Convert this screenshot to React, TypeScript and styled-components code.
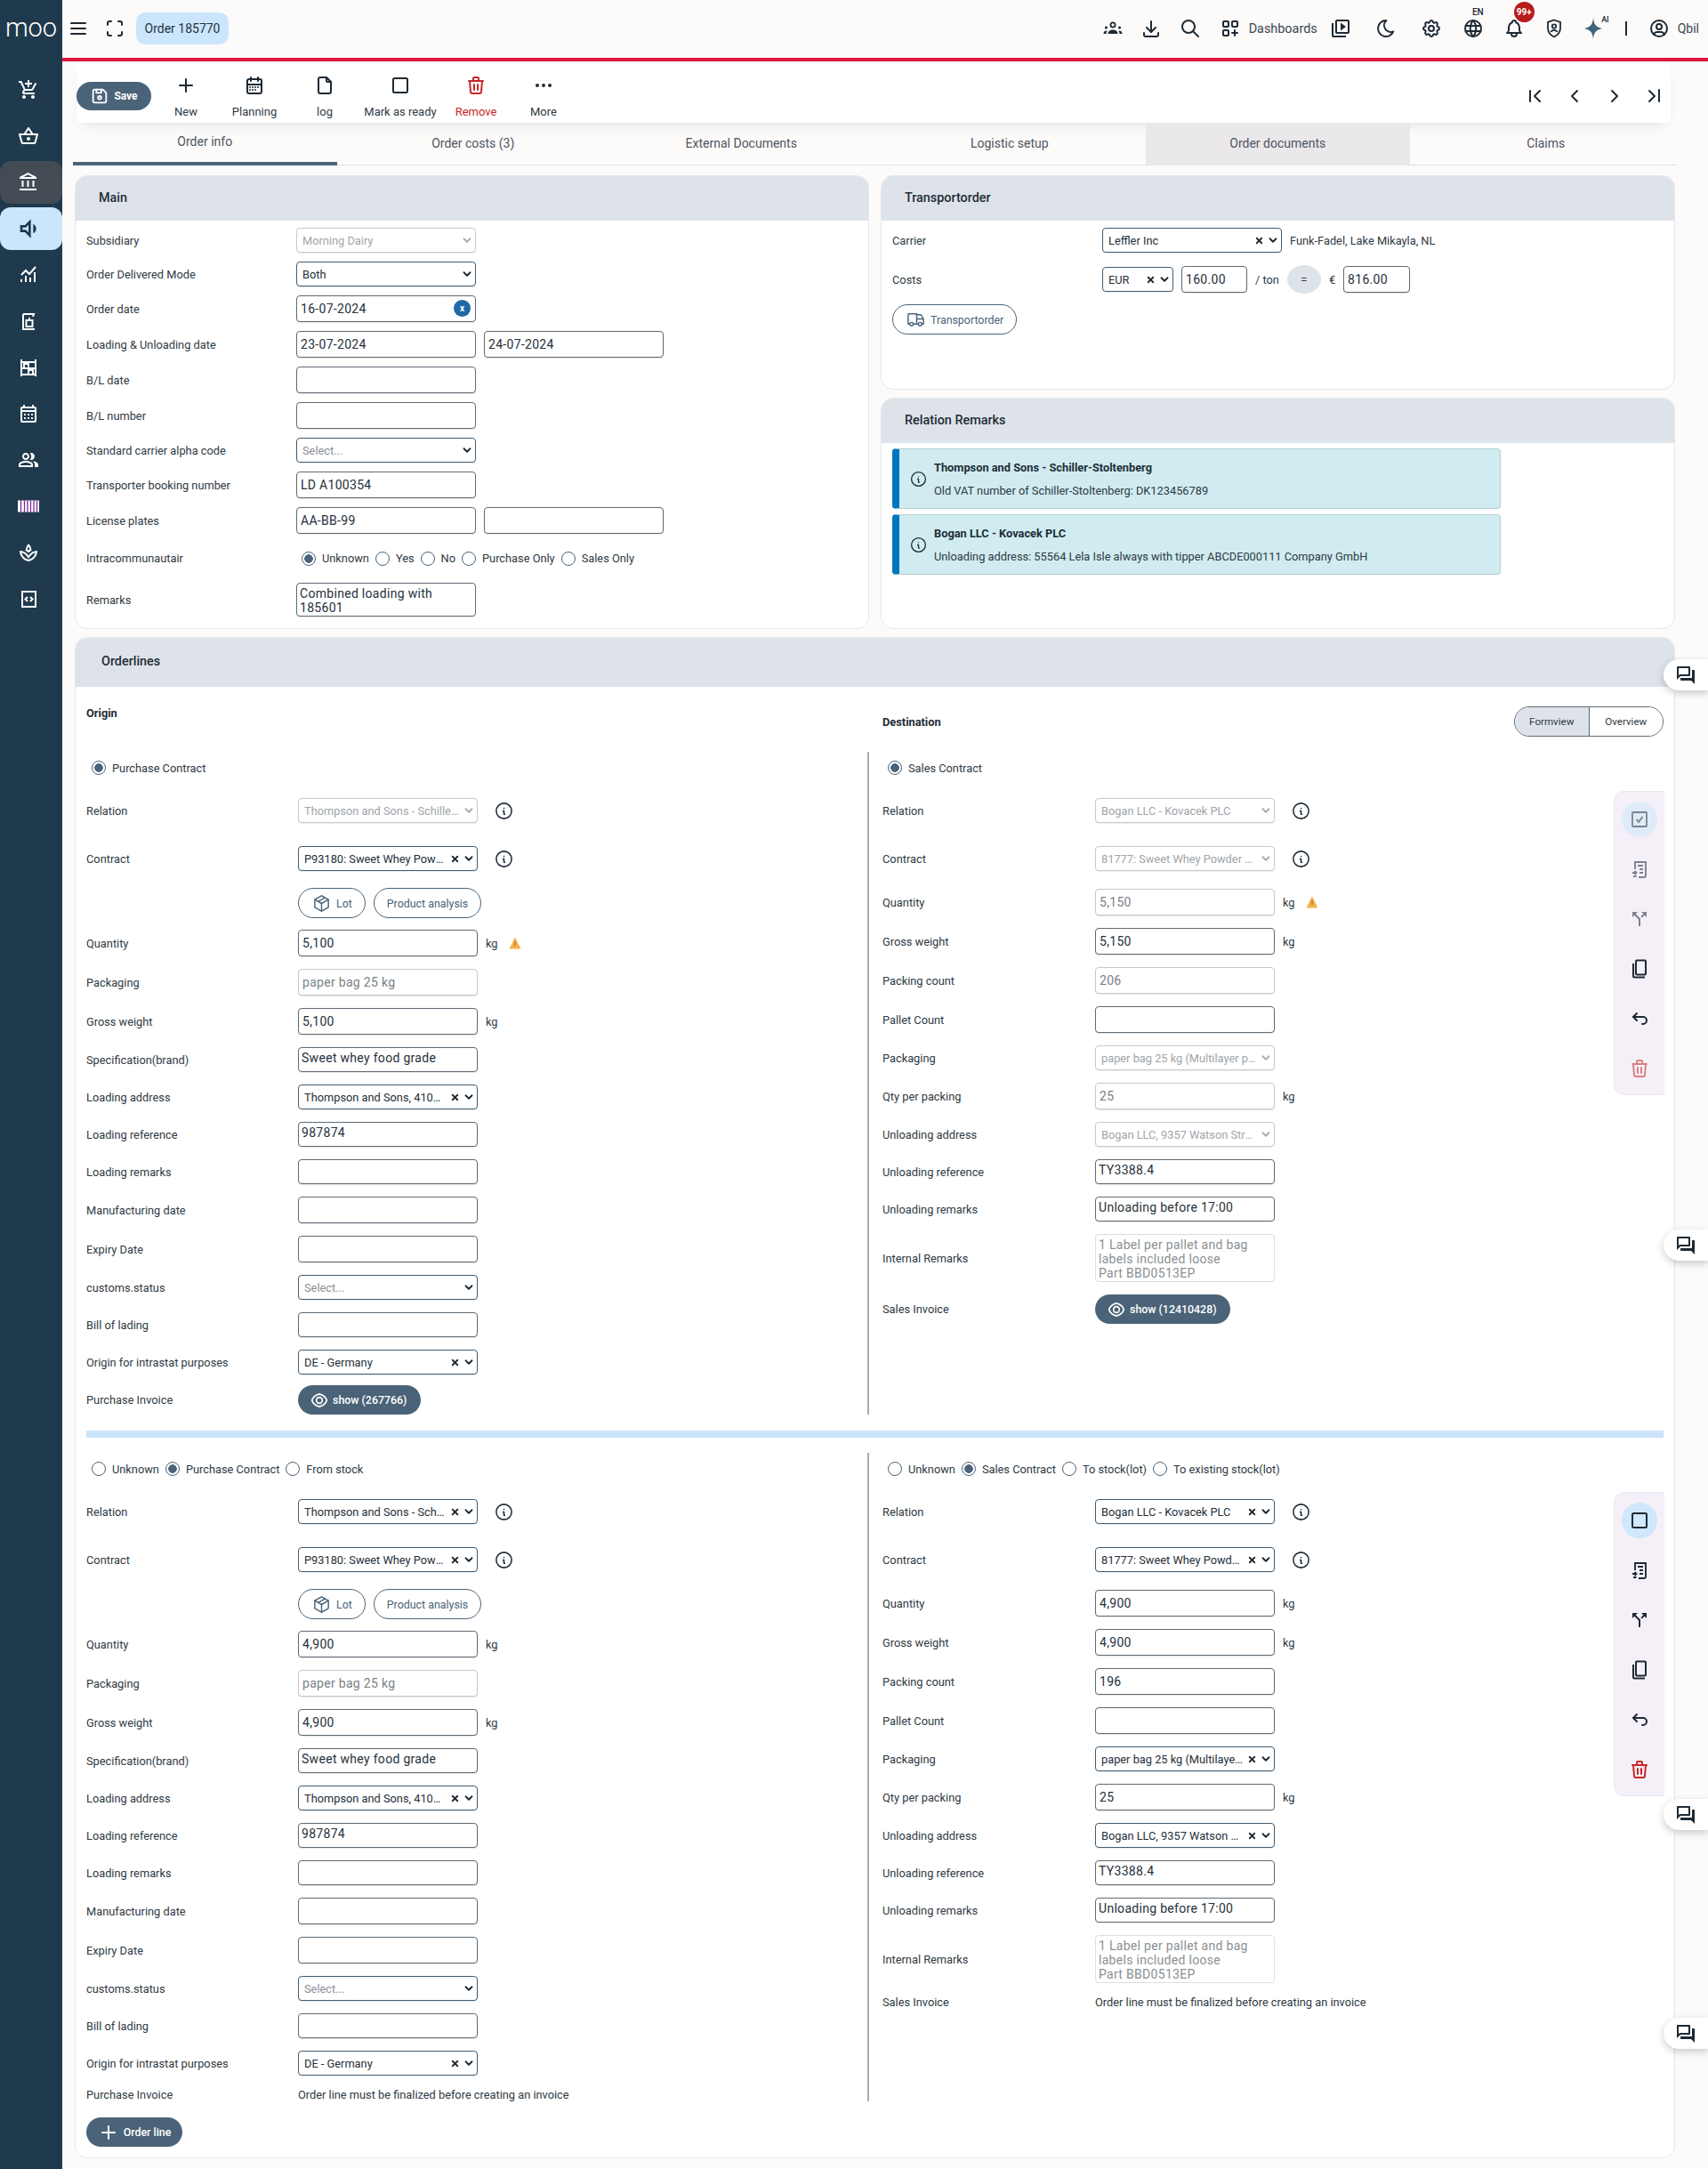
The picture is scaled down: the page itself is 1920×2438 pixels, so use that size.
import React from "react";
import styled, { createGlobalStyle } from "styled-components";
import {
  TbMenu2, TbMaximize, TbDownload, TbSearch, TbLayoutGridAdd, TbMoon, TbSettings, TbWorld, TbBell,
  TbUserCircle, TbChevronLeft, TbChevronRight, TbChevronLeftPipe, TbChevronRightPipe, TbPlus,
  TbCalendarMonth, TbFile, TbTrash, TbDots, TbDeviceFloppy, TbPackage, TbTruck, TbInfoCircle,
  TbArrowBackUp, TbChevronDown, TbX,
} from "react-icons/tb";
import {
  MdOutlineAddShoppingCart, MdOutlineShoppingBasket, MdOutlineAccountBalance, MdOutlineVolumeDown,
  MdOutlineCalendarMonth, MdOutlinePeopleAlt, MdOutlineSpa, MdOutlineVideoLibrary, MdOutlineQuestionAnswer,
  MdCallSplit,
} from "react-icons/md";

const GlobalStyle = createGlobalStyle`
  html, body { margin: 0; padding: 0; background: #fdfafa; }
  body { font-family: Roboto, "Liberation Sans", sans-serif; color: #222; overflow: hidden; }
  * { box-sizing: border-box; }
`;

const navy = "#4a6378";

const Page = styled.div`
  display: flex;
  width: 1920px;
  height: 2438px;
  position: relative;
  overflow: hidden;
`;

/* sidebar */
const Sidebar = styled.aside`
  width: 70px;
  flex: none;
  background: #1f3a4d;
  color: #fff;
`;
const Logo = styled.div`
  height: 65px;
  display: flex;
  align-items: center;
  justify-content: center;
  font-size: 29px;
  font-weight: 300;
  padding-bottom: 4px;
`;
const SideList = styled.nav`
  margin-top: 12px;
  display: flex;
  flex-direction: column;
  gap: 4px;
`;
const SideItem = styled.div<{ $state?: "hover" | "active" }>`
  height: 48px;
  display: flex;
  align-items: center;
  justify-content: center;
  padding-right: 6px;
  border-radius: 12px;
  font-size: ${(p) => (p.$state === "active" ? 32 : 24)}px;
  background: ${(p) => (p.$state === "hover" ? "#434c55" : p.$state === "active" ? "#cbe6fc" : "transparent")};
  color: ${(p) => (p.$state === "active" ? "#1f3a4d" : "#fff")};
`;

/* header */
const Main = styled.div`
  flex: 1;
  min-width: 0;
`;
const Header = styled.header`
  height: 69px;
  border-bottom: 4px solid #e0143f;
  display: flex;
  align-items: center;
  padding: 0 10px 1px 6px;
`;
const HeadIcon = styled.span<{ $gap?: number; $size?: number }>`
  position: relative;
  display: inline-flex;
  margin-left: ${(p) => p.$gap ?? 0}px;
  font-size: ${(p) => p.$size ?? 24}px;
  color: #1d2a35;
`;
const Chip = styled.div`
  margin-left: 12px;
  width: 104px;
  height: 36px;
  border-radius: 10px;
  background: #cbe6fc;
  display: flex;
  align-items: center;
  justify-content: center;
  font-size: 14px;
  color: #24323e;
`;
const HeadRight = styled.div`
  margin-left: auto;
  display: flex;
  align-items: center;
`;
const DashLabel = styled.span`
  margin-left: 9px;
  font-size: 14.4px;
  color: #3a4752;
`;
const TinyTag = styled.span<{ $beside?: boolean }>`
  position: absolute;
  top: ${(p) => (p.$beside ? -3 : -12)}px;
  right: ${(p) => (p.$beside ? -6 : 0)}px;
  font-size: ${(p) => (p.$beside ? 9 : 10)}px;
  font-weight: 500;
`;
const Badge = styled.span`
  position: absolute;
  top: -18px;
  right: -11px;
  width: 23px;
  height: 23px;
  border-radius: 50%;
  background: #b71c1c;
  color: #fff;
  font-size: 10px;
  font-weight: 700;
  display: flex;
  align-items: center;
  justify-content: center;
`;
const VBar = styled.span`
  margin-left: 24px;
  width: 2px;
  height: 16px;
  background: #1d2a35;
`;
const UserName = styled.span`
  margin-left: 9px;
  font-size: 14px;
  color: #3a4752;
`;

/* toolbar */
const Toolbar = styled.div`
  height: 69px;
  margin-left: 16px;
  margin-right: 42px;
  padding-right: 6px;
  display: flex;
  align-items: center;
  background: #fff;
  box-shadow: 0 8px 14px -8px rgba(60, 60, 70, 0.18);
`;
const SaveButton = styled.button`
  width: 84px;
  height: 32px;
  margin-top: 9px;
  border: 0;
  border-radius: 16px;
  background: ${navy};
  color: #fff;
  display: flex;
  align-items: center;
  justify-content: center;
  gap: 5px;
  font: 700 12px Roboto, sans-serif;
  svg { font-size: 22px; }
`;
const ToolItem = styled.div<{ $w: number; $red?: boolean }>`
  width: ${(p) => p.$w}px;
  margin-top: 10px;
  display: flex;
  flex-direction: column;
  align-items: center;
  gap: 10px;
  font-size: 13px;
  color: ${(p) => (p.$red ? "#c62828" : "#2f3b46")};
  svg { font-size: 24px; color: ${(p) => (p.$red ? "#c62828" : "#1d2a35")}; }
`;
const Pager = styled.div`
  margin-left: auto;
  margin-top: 9px;
  display: flex;
  gap: 21px;
  font-size: 24px;
  color: #1d2a35;
`;

/* tabs */
const Tabs = styled.div`
  margin: 0 34px 0 12px;
  height: 48px;
  display: flex;
  gap: 5px;
  border-bottom: 1px solid #e2e2e4;
`;
const Tab = styled.div<{ $active?: boolean; $hover?: boolean }>`
  flex: 1;
  height: 48px;
  display: flex;
  align-items: center;
  justify-content: center;
  font-size: 14px;
  color: #4d5560;
  padding-bottom: ${(p) => (p.$active ? 2 : 3)}px;
  background: ${(p) => (p.$hover ? "#ebe8eb" : "transparent")};
  border-bottom: ${(p) => (p.$active ? `4px solid ${navy}` : "0")};
`;

/* panels */
const Content = styled.div`
  margin: 11px 37px 0 14px;
  display: flex;
  flex-direction: column;
  gap: 9px;
`;
const TopGrid = styled.div`
  display: grid;
  grid-template-columns: 893px 893px;
  gap: 13px;
`;
const Stack = styled.div`
  display: flex;
  flex-direction: column;
  gap: 9px;
`;
const Panel = styled.section<{ $h?: number }>`
  background: #fff;
  border: 1px solid #e4e8ed;
  border-radius: 14px;
  height: ${(p) => (p.$h ? `${p.$h}px` : "auto")};
  overflow: hidden;
`;
const PanelHead = styled.h2<{ $h?: number; $pad?: number }>`
  margin: 0;
  height: ${(p) => p.$h ?? 50}px;
  background: #dee3ea;
  padding: 0 0 2px ${(p) => p.$pad ?? 26}px;
  display: flex;
  align-items: center;
  font-size: 14.4px;
  font-weight: 500;
  color: #222c36;
`;
const PanelBody = styled.div<{ $gap?: number; $pad?: string }>`
  padding: ${(p) => p.$pad ?? "8px 12px"};
  display: flex;
  flex-direction: column;
  gap: ${(p) => p.$gap ?? 10}px;
`;

/* form rows */
const Row = styled.div<{ $label: number; $mt?: number; $h?: number }>`
  display: grid;
  grid-template-columns: ${(p) => p.$label}px auto;
  align-items: center;
  margin-top: ${(p) => p.$mt ?? 0}px;
  min-height: ${(p) => p.$h ?? 0}px;
`;
const Label = styled.label`
  font-size: 12.8px;
  color: #2f3a44;
`;
const Controls = styled.div`
  display: flex;
  align-items: center;
  gap: 9px;
  font-size: 12.8px;
  color: #2f3a44;
`;
const TextInput = styled.input<{ $w?: number }>`
  width: ${(p) => p.$w ?? 202}px;
  height: 30px;
  flex: none;
  border: 1px solid #5d6a75;
  border-radius: 4px;
  padding: 0 4px;
  background: #fff;
  font: 14px/1.2 Roboto, sans-serif;
  letter-spacing: 0.3px;
  color: #26303a;
  box-shadow: 0 1px 1px rgba(0, 0, 0, 0.1);
  &:disabled {
    border-color: #c4c9ce;
    color: #7a7f85;
    opacity: 1;
  }
`;
const TextBox = styled.textarea<{ $h?: number }>`
  display: block;
  width: 202px;
  height: ${(p) => p.$h ?? 28}px;
  border: 1px solid #5d6a75;
  border-radius: 4px;
  padding: 3px 3px 0;
  resize: none;
  overflow: hidden;
  background: #fff;
  font: 14px/16px Roboto, sans-serif;
  letter-spacing: 0.3px;
  color: #26303a;
  box-shadow: 0 1px 1px rgba(0, 0, 0, 0.1);
  &:disabled {
    border-color: #dcdfe2;
    color: #8a8f94;
    box-shadow: none;
  }
`;
const SelectFrame = styled.div<{ $locked?: boolean; $w?: number }>`
  width: ${(p) => p.$w ?? 202}px;
  height: 28px;
  flex: none;
  display: flex;
  align-items: center;
  padding: 0 2px 0 6px;
  background: #fff;
  border: 1px solid ${(p) => (p.$locked ? "#c4cad0" : "#3f5c73")};
  border-radius: 4px;
  box-shadow: 0 1px 1px rgba(0, 0, 0, 0.08);
  color: ${(p) => (p.$locked ? "#a0a5aa" : "#26303a")};
  font-size: 12.8px;
`;
const SelectText = styled.span<{ $placeholder?: boolean; $room?: boolean }>`
  flex: 1;
  min-width: 0;
  margin-right: ${(p) => (p.$room ? 4 : 0)}px;
  overflow: hidden;
  white-space: nowrap;
  text-overflow: ellipsis;
  color: ${(p) => (p.$placeholder ? "#8b9096" : "inherit")};
`;
const ClearMark = styled(TbX)`
  flex: none;
  font-size: 11px;
  stroke-width: 4;
  margin: 0 3px 0 5px;
  color: #1d2a35;
`;
const Chevron = styled(TbChevronDown)<{ $locked?: boolean }>`
  flex: none;
  font-size: 14px;
  stroke-width: 3.2;
  color: ${(p) => (p.$locked ? "#a8adb2" : "#1d2a35")};
`;
const InfoMark = styled(TbInfoCircle)`
  flex: none;
  font-size: 23px;
  margin-left: 9px;
  stroke-width: 1.6;
  color: #1d2a35;
`;
const Warn = styled.svg`
  margin-left: 3px;
  width: 14px;
  height: 14px;
`;
const DateWrap = styled.span`
  position: relative;
  display: inline-flex;
  justify-self: start;
`;
const DateClear = styled.span`
  position: absolute;
  right: 6px;
  top: 5px;
  width: 19px;
  height: 19px;
  border-radius: 50%;
  background: #1f69a8;
  color: #fff;
  display: flex;
  align-items: center;
  justify-content: center;
  font-size: 10px;
  font-weight: 700;
`;
const RadioGroup = styled.div<{ $pad?: number; $h?: number }>`
  display: flex;
  align-items: center;
  gap: 7px;
  padding-left: ${(p) => p.$pad ?? 6}px;
  height: ${(p) => p.$h ?? 36}px;
  font-size: 12.8px;
  color: #2f3a44;
`;
const RadioItem = styled.label`
  display: flex;
  align-items: center;
  gap: 7px;
`;
const RadioDot = styled.input`
  appearance: none;
  margin: 0;
  width: 16px;
  height: 16px;
  border-radius: 50%;
  border: 1.5px solid ${navy};
  background: #fff;
  &:checked {
    background: radial-gradient(circle, ${navy} 0 4.5px, #fff 5px);
  }
`;
const PillOutline = styled.button`
  height: 34px;
  padding: 0 14px;
  display: inline-flex;
  align-items: center;
  gap: 5px;
  border: 1px solid ${navy};
  border-radius: 17px;
  background: #fff;
  color: ${navy};
  font: 12.4px Roboto, sans-serif;
  white-space: nowrap;
  svg { font-size: 23px; stroke-width: 1.5; }
`;
const PillFill = styled.button<{ $w?: number }>`
  height: 33px;
  width: ${(p) => (p.$w ? `${p.$w}px` : "auto")};
  padding: 0 14px;
  display: inline-flex;
  align-items: center;
  gap: 5px;
  border: 0;
  border-radius: 17px;
  background: ${navy};
  color: #fff;
  font: 500 12.4px Roboto, sans-serif;
  white-space: nowrap;
  svg { flex: none; }
`;

/* transport */
const Plain = styled.span`
  font-size: 12.8px;
  color: #2f3a44;
`;
const EqualBubble = styled.span`
  width: 38px;
  height: 32px;
  border-radius: 50%;
  background: #dee3ea;
  display: flex;
  align-items: center;
  justify-content: center;
  font-size: 13px;
`;
const ButtonSlot = styled.div`
  margin-top: -2px;
`;
const Notice = styled.div`
  width: 684px;
  height: 68px;
  display: flex;
  align-items: center;
  background: #d0ecf1;
  border: 1px solid #b5cfd6;
  border-left: 8px solid #0277bd;
  border-radius: 4px;
  padding-left: 11px;
  gap: 7px;
  font-size: 12.8px;
  color: #2f3a44;
  svg { font-size: 21px; flex: none; stroke-width: 1.5; color: #1d2a35; }
`;
const NoticeText = styled.div`
  display: flex;
  flex-direction: column;
  gap: 11px;
  strong { font-weight: 700; color: #222c36; font-size: 12.8px; }
`;

/* orderlines */
const HeadingRow = styled.div`
  height: 73px;
  display: flex;
`;
const Origin = styled.h3`
  margin: 22px 0 0;
  width: 895px;
  font-size: 12.8px;
  font-weight: 700;
  color: #222c36;
`;
const Destination = styled.div`
  flex: 1;
  height: 73px;
  padding-top: 5px;
  display: flex;
  align-items: center;
  justify-content: space-between;
  h3 { margin: 0; font-size: 12.8px; font-weight: 700; color: #222c36; }
`;
const ViewToggle = styled.div`
  display: flex;
  width: 168px;
  height: 34px;
  border: 1px solid #5d6a75;
  border-radius: 17px;
  overflow: hidden;
  font-size: 11.6px;
  color: #2f3a44;
`;
const ViewOption = styled.span<{ $on?: boolean }>`
  flex: 1;
  display: flex;
  align-items: center;
  justify-content: center;
  background: ${(p) => (p.$on ? "#dee3ea" : "#fff")};
  & + & { border-left: 1px solid #5d6a75; }
`;
const Block = styled.div`
  display: grid;
  grid-template-columns: 878px 896px;
`;
const LeftCol = styled.div`
  display: flex;
  flex-direction: column;
`;
const RightCol = styled.div`
  border-left: 2px solid #a9adb1;
  padding-left: 15px;
  display: flex;
  justify-content: space-between;
`;
const StackCol = styled.div`
  display: flex;
  flex-direction: column;
`;
const Actions = styled.div`
  width: 57px;
  height: 342px;
  margin-top: 44px;
  padding-top: 11px;
  background: #f5f0f7;
  border: 1px solid #ece8ee;
  border-right: 0;
  border-radius: 12px 0 0 12px;
  display: flex;
  flex-direction: column;
  align-items: center;
  gap: 16px;
`;
const ActionSlot = styled.span<{ $on?: boolean; $red?: boolean; $dim?: boolean }>`
  width: 40px;
  height: 40px;
  border-radius: 50%;
  display: flex;
  align-items: center;
  justify-content: center;
  font-size: 24px;
  background: ${(p) => (p.$on ? "#cfe8fb" : "transparent")};
  color: ${(p) => (p.$red ? "#c62828" : "#1d2a35")};
  opacity: ${(p) => (p.$dim ? 0.55 : 1)};
`;
const BlueRule = styled.div`
  height: 8px;
  margin: 18px 0 17px;
  background: #cbe4f9;
`;
const AddLine = styled(PillFill)`
  width: 108px;
  margin-top: 18px;
  justify-content: center;
  svg { font-size: 24px; }
`;
const ChatTab = styled.div<{ $top: number }>`
  position: absolute;
  right: 0;
  top: ${(p) => p.$top}px;
  width: 50px;
  height: 35px;
  background: #fff;
  border-radius: 18px 0 0 18px;
  box-shadow: 0 3px 8px rgba(40, 50, 60, 0.25);
  display: flex;
  align-items: center;
  justify-content: center;
  font-size: 24px;
  color: #1d2a35;
`;

/* icons drawn by hand where the packages have nothing close */
const Icon = styled.svg`
  width: 1em;
  height: 1em;
  display: block;
`;
const GroupIcon = () => (
  <Icon viewBox="0 0 24 24" fill="currentColor">
    <circle cx="12" cy="8" r="2.6" fill="none" stroke="currentColor" strokeWidth="1.8" />
    <path d="M6.5 18c0-3 2.4-4.6 5.5-4.6s5.5 1.6 5.5 4.6z" />
    <circle cx="4.5" cy="11" r="1.6" />
    <circle cx="19.5" cy="11" r="1.6" />
    <path d="M1.5 18c0-2 1-3.2 3-3.5.4 0 .8.2 1 .4-.7.9-1 1.9-1 3.1zM22.5 18c0-2-1-3.2-3-3.5-.4 0-.8.2-1 .4.7.9 1 1.9 1 3.1z" />
  </Icon>
);
const ShieldIcon = () => (
  <Icon viewBox="0 0 24 24" fill="none" stroke="currentColor" strokeWidth="1.8">
    <path d="M12 2.500l7 2.500v6.500c0 4.600-3 8-7 10-4-2-7-5.400-7-10V5z" />
    <circle cx="12" cy="9.500" r="2.200" />
    <path d="M8.500 16c.6-1.500 2-2.200 3.500-2.200s2.900.7 3.500 2.200" />
  </Icon>
);
const StarIcon = () => (
  <Icon viewBox="0 0 24 24" fill="#3e627a">
    <path d="M12 0c.7 7.500 3 10.500 10 12-7 1.500-9.300 4.500-10 12-.7-7.500-3-10.500-10-12 7-1.500 9.300-4.500 10-12z" />
  </Icon>
);
const SquareIcon = () => (
  <Icon viewBox="0 0 24 24" fill="none" stroke="currentColor" strokeWidth="2">
    <rect x="4" y="4" width="16" height="16" rx="1.500" />
  </Icon>
);
const EyeRing = ({ size = 20 }: { size?: number }) => (
  <svg width={size} height={size} viewBox="0 0 24 24" fill="none" stroke="#fff" strokeWidth="2">
    <path d="M12 3.500C6.500 5 3 8.500 2 12c1 3.500 4.500 7 10 8.500 5.500-1.500 9-5 10-8.500-1-3.500-4.500-7-10-8.500z" />
    <circle cx="12" cy="12" r="4" />
  </svg>
);
const ChartIcon = () => (
  <Icon viewBox="0 0 24 24" fill="none" stroke="currentColor" strokeWidth="2">
    <path d="M4 12l5-5 4 4 7-8" />
    <path d="M4 20v-3M9 20v-7M14 20v-5M19 20V9" />
  </Icon>
);
const ScaleIcon = () => (
  <Icon viewBox="0 0 24 24" fill="none" stroke="currentColor" strokeWidth="2">
    <path d="M6 4v17h13M6 4h12l-1 3" />
    <rect x="9.500" y="11" width="7" height="7" />
    <path d="M13 8v3" />
  </Icon>
);
const ShelfIcon = () => (
  <Icon viewBox="0 0 24 24" fill="none" stroke="currentColor" strokeWidth="2">
    <path d="M4 3v19M20 3v19M4 6h16M4 13h16M4 20h16" />
    <rect x="7" y="8" width="5" height="5" />
    <rect x="12" y="15" width="5" height="5" />
  </Icon>
);
const BarcodeIcon = () => (
  <Icon viewBox="0 0 24 24">
    <path d="M0 5.500h24v13H0z" fill="#fff" />
    <path d="M3.500 5.500v13M7.500 5.500v13M11 5.500v13M14.500 5.500v13M18 5.500v13M21.500 5.500v13" stroke="#7b2c9b" strokeWidth="1.300" />
  </Icon>
);
const CodeIcon = () => (
  <Icon viewBox="0 0 24 24" fill="none" stroke="currentColor" strokeWidth="2">
    <rect x="5" y="4" width="15" height="17" />
    <path d="M11 10l-2.500 2.500L11 15M14 10l2.500 2.500L14 15" />
  </Icon>
);
const ChecklistIcon = () => (
  <Icon viewBox="0 0 24 24" fill="none" stroke="currentColor" strokeWidth="1.900">
    <path d="M7 12V4h12v15.500a1.500 1.500 0 0 1-1.500 1.500H11" />
    <path d="M10 8h6M12 12h4M12 16h4" />
    <path d="M4 16h4.500M6.500 14l2 2-2 2M8.500 20H5" />
  </Icon>
);
const CheckBoxIcon = () => (
  <Icon viewBox="0 0 24 24" fill="none" stroke="currentColor" strokeWidth="1.800">
    <rect x="4" y="4" width="16" height="16" rx="1" />
    <path d="M8.500 12l2.500 3 4.500-6" />
  </Icon>
);
const CopyIcon = () => (
  <Icon viewBox="0 0 24 24" fill="none" stroke="currentColor" strokeWidth="2">
    <rect x="8" y="2.500" width="11" height="16" rx="1" />
    <path d="M5 6v14.500a1 1 0 0 0 1 1h12" />
  </Icon>
);
const WarnIcon = () => (
  <Warn viewBox="0 0 24 24">
    <path d="M12 1L23 23H1z" fill="#f6b04a" />
    <path d="M12 8v9" stroke="#a5611a" strokeWidth="1.800" />
  </Warn>
);

type SelectProps = { value?: string; placeholder?: string; locked?: boolean; clear?: boolean; w?: number };
const Select = ({ value, placeholder, locked, clear, w }: SelectProps) => (
  <SelectFrame $locked={locked} $w={w}>
    <SelectText $placeholder={!!placeholder} $room={!clear}>{value ?? placeholder}</SelectText>
    {clear && <ClearMark />}
    <Chevron $locked={locked} />
  </SelectFrame>
);

const Radios = ({ items, on, pad, h }: { items: string[]; on: string; pad?: number; h?: number }) => (
  <RadioGroup $pad={pad} $h={h}>
    {items.map((name) => (
      <RadioItem key={name}>
        <RadioDot type="radio" readOnly checked={name === on} />
        {name}
      </RadioItem>
    ))}
  </RadioGroup>
);

const F = ({ label, mt = 14, w = 238, children }: { label: string; mt?: number; w?: number; children: React.ReactNode }) => (
  <Row $label={w} $mt={mt}>
    <Label>{label}</Label>
    <Controls>{children}</Controls>
  </Row>
);

const Sent = () => <Plain>Order line must be finalized before creating an invoice</Plain>;

const Show = ({ text, w }: { text: string; w: number }) => (
  <PillFill $w={w}>
    <EyeRing />
    {text}
  </PillFill>
);

type OriginProps = { radios: string[]; relation: string; qty: string; warn?: boolean; invoice: React.ReactNode };
const OriginForm = ({ radios, relation, qty, warn, invoice }: OriginProps) => {
  const locked = radios.length === 1;
  return (
    <LeftCol>
      <Radios items={radios} on="Purchase Contract" />
      <F label="Relation" mt={16}>
        <Select value={relation} locked={locked} clear={!locked} />
        <InfoMark />
      </F>
      <F label="Contract" mt={26}>
        <Select value="P93180: Sweet Whey Powder 25 kg" clear />
        <InfoMark />
      </F>
      <F label="" mt={19}>
        <PillOutline>
          <TbPackage /> Lot
        </PillOutline>
        <PillOutline>Product analysis</PillOutline>
      </F>
      <F label="Quantity" mt={13}>
        <TextInput readOnly value={qty} />
        kg {warn && <WarnIcon />}
      </F>
      <F label="Packaging">
        <TextInput disabled value="paper bag 25 kg" />
      </F>
      <F label="Gross weight">
        <TextInput readOnly value={qty} />
        kg
      </F>
      <F label="Specification(brand)">
        <TextBox readOnly value="Sweet whey food grade" />
      </F>
      <F label="Loading address">
        <Select value="Thompson and Sons, 4102 Main Street" clear />
      </F>
      <F label="Loading reference">
        <TextBox readOnly value="987874" />
      </F>
      <F label="Loading remarks">
        <TextBox readOnly />
      </F>
      <F label="Manufacturing date">
        <TextInput readOnly />
      </F>
      <F label="Expiry Date">
        <TextInput readOnly />
      </F>
      <F label="customs.status">
        <Select placeholder="Select..." />
      </F>
      <F label="Bill of lading">
        <TextBox readOnly />
      </F>
      <F label="Origin for intrastat purposes">
        <Select value="DE - Germany" clear />
      </F>
      <F label="Purchase Invoice" mt={locked ? 12 : 14}>
        {invoice}
      </F>
    </LeftCol>
  );
};

type DestProps = {
  radios: string[];
  on?: boolean;
  relation: string;
  contract: string;
  qty: string;
  count: string;
  packaging: string;
  address: string;
  invoice: React.ReactNode;
};
const DestinationForm = ({ radios, on, relation, contract, qty, count, packaging, address, invoice }: DestProps) => (
  <StackCol>
    <Radios items={radios} on="Sales Contract" />
    <F label="Relation" mt={16} w={239}>
      <Select value={relation} locked={!on} clear={on} />
      <InfoMark />
    </F>
    <F label="Contract" mt={26} w={239}>
      <Select value={contract} locked={!on} clear={on} />
      <InfoMark />
    </F>
    <F label="Quantity" mt={20} w={239}>
      <TextInput disabled={!on} readOnly={on} value={qty} />
      kg {!on && <WarnIcon />}
    </F>
    <F label="Gross weight" w={239}>
      <TextInput readOnly value={qty} />
      kg
    </F>
    <F label="Packing count" w={239}>
      <TextInput disabled={!on} readOnly={on} value={count} />
    </F>
    <F label="Pallet Count" w={239}>
      <TextInput readOnly />
    </F>
    <F label="Packaging" w={239}>
      <Select value={packaging} locked={!on} clear={on} />
    </F>
    <F label="Qty per packing" w={239}>
      <TextInput disabled={!on} readOnly={on} value="25" />
      kg
    </F>
    <F label="Unloading address" w={239}>
      <Select value={address} locked={!on} clear={on} />
    </F>
    <F label="Unloading reference" w={239}>
      <TextBox readOnly value="TY3388.4" />
    </F>
    <F label="Unloading remarks" w={239}>
      <TextBox readOnly value="Unloading before 17:00" />
    </F>
    <F label="Internal Remarks" w={239}>
      <TextBox disabled $h={54} value={"1 Label per pallet and bag labels included loose\nPart BBD0513EP"} />
    </F>
    <F label="Sales Invoice" w={239}>
      {invoice}
    </F>
  </StackCol>
);

const ActionRail = ({ first }: { first?: boolean }) => (
  <Actions>
    <ActionSlot $on $dim={first}>{first ? <CheckBoxIcon /> : <SquareIcon />}</ActionSlot>
    <ActionSlot $dim={first}><ChecklistIcon /></ActionSlot>
    <ActionSlot $dim={first}><MdCallSplit /></ActionSlot>
    <ActionSlot><CopyIcon /></ActionSlot>
    <ActionSlot><TbArrowBackUp /></ActionSlot>
    <ActionSlot $red $dim={first}><TbTrash /></ActionSlot>
  </Actions>
);

const App = () => (
  <Page>
    <GlobalStyle />
    <Sidebar>
      <Logo>moo</Logo>
      <SideList>
        <SideItem><MdOutlineAddShoppingCart /></SideItem>
        <SideItem><MdOutlineShoppingBasket /></SideItem>
        <SideItem $state="hover"><MdOutlineAccountBalance /></SideItem>
        <SideItem $state="active"><MdOutlineVolumeDown /></SideItem>
        <SideItem><ChartIcon /></SideItem>
        <SideItem><ScaleIcon /></SideItem>
        <SideItem><ShelfIcon /></SideItem>
        <SideItem><MdOutlineCalendarMonth /></SideItem>
        <SideItem><MdOutlinePeopleAlt /></SideItem>
        <SideItem><BarcodeIcon /></SideItem>
        <SideItem><MdOutlineSpa /></SideItem>
        <SideItem><CodeIcon /></SideItem>
      </SideList>
    </Sidebar>
    <Main>
      <Header>
        <HeadIcon><TbMenu2 /></HeadIcon>
        <HeadIcon $gap={17}><TbMaximize /></HeadIcon>
        <Chip>Order 185770</Chip>
        <HeadRight>
          <HeadIcon><GroupIcon /></HeadIcon>
          <HeadIcon $gap={19}><TbDownload /></HeadIcon>
          <HeadIcon $gap={20}><TbSearch /></HeadIcon>
          <HeadIcon $gap={21}><TbLayoutGridAdd /></HeadIcon>
          <DashLabel>Dashboards</DashLabel>
          <HeadIcon $gap={14}><MdOutlineVideoLibrary /></HeadIcon>
          <HeadIcon $gap={27}><TbMoon /></HeadIcon>
          <HeadIcon $gap={27}><TbSettings /></HeadIcon>
          <HeadIcon $gap={23}>
            <TbWorld />
            <TinyTag>EN</TinyTag>
          </HeadIcon>
          <HeadIcon $gap={22}>
            <TbBell />
            <Badge>99+</Badge>
          </HeadIcon>
          <HeadIcon $gap={21}><ShieldIcon /></HeadIcon>
          <HeadIcon $gap={20}>
            <StarIcon />
            <TinyTag $beside>AI</TinyTag>
          </HeadIcon>
          <VBar />
          <HeadIcon $gap={24}><TbUserCircle /></HeadIcon>
          <UserName>Qbil</UserName>
        </HeadRight>
      </Header>
      <Toolbar>
        <SaveButton><TbDeviceFloppy /> Save</SaveButton>
        <ToolItem $w={78}><TbPlus />New</ToolItem>
        <ToolItem $w={76}><TbCalendarMonth />Planning</ToolItem>
        <ToolItem $w={82}><TbFile />log</ToolItem>
        <ToolItem $w={88}><SquareIcon />Mark as ready</ToolItem>
        <ToolItem $w={82} $red><TbTrash />Remove</ToolItem>
        <ToolItem $w={70}><TbDots />More</ToolItem>
        <Pager>
          <TbChevronLeftPipe />
          <TbChevronLeft />
          <TbChevronRight />
          <TbChevronRightPipe />
        </Pager>
      </Toolbar>
      <Tabs>
        <Tab $active>Order info</Tab>
        <Tab>Order costs (3)</Tab>
        <Tab>External Documents</Tab>
        <Tab>Logistic setup</Tab>
        <Tab $hover>Order documents</Tab>
        <Tab>Claims</Tab>
      </Tabs>
      <Content>
        <TopGrid>
          <Panel $h={510}>
            <PanelHead>Main</PanelHead>
            <PanelBody>
              <Row $label={236}><Label>Subsidiary</Label><Select value="Morning Dairy" locked /></Row>
              <Row $label={236}><Label>Order Delivered Mode</Label><Select value="Both" /></Row>
              <Row $label={236}>
                <Label>Order date</Label>
                <DateWrap>
                  <TextInput readOnly value="16-07-2024" />
                  <DateClear>x</DateClear>
                </DateWrap>
              </Row>
              <Row $label={236}>
                <Label>Loading &amp; Unloading date</Label>
                <Controls>
                  <TextInput readOnly value="23-07-2024" />
                  <TextInput readOnly value="24-07-2024" />
                </Controls>
              </Row>
              <Row $label={236}><Label>B/L date</Label><TextInput readOnly /></Row>
              <Row $label={236}><Label>B/L number</Label><TextInput readOnly /></Row>
              <Row $label={236}><Label>Standard carrier alpha code</Label><Select placeholder="Select..." /></Row>
              <Row $label={236}><Label>Transporter booking number</Label><TextInput readOnly value="LD A100354" /></Row>
              <Row $label={236}>
                <Label>License plates</Label>
                <Controls>
                  <TextInput readOnly value="AA-BB-99" />
                  <TextInput readOnly />
                </Controls>
              </Row>
              <Row $label={236} $h={35}>
                <Label>Intracommunautair</Label>
                <Radios pad={6} h={35} items={["Unknown", "Yes", "No", "Purchase Only", "Sales Only"]} on="Unknown" />
              </Row>
              <Row $label={236}>
                <Label>Remarks</Label>
                <TextBox readOnly $h={38} value={"Combined loading with 185601"} />
              </Row>
            </PanelBody>
          </Panel>
          <Stack>
            <Panel $h={241}>
              <PanelHead>Transportorder</PanelHead>
              <PanelBody $gap={14}>
                <Row $label={236}>
                  <Label>Carrier</Label>
                  <Controls>
                    <Select value="Leffler Inc" clear />
                    <Plain>Funk-Fadel, Lake Mikayla, NL</Plain>
                  </Controls>
                </Row>
                <Row $label={236}>
                  <Label>Costs</Label>
                  <Controls>
                    <Select value="EUR" clear w={80} />
                    <TextInput $w={74} readOnly value="160.00" />
                    <Plain>/ ton</Plain>
                    <EqualBubble>=</EqualBubble>
                    <Plain>€</Plain>
                    <TextInput $w={75} readOnly value="816.00" />
                  </Controls>
                </Row>
                <ButtonSlot>
                  <PillOutline><TbTruck /> Transportorder</PillOutline>
                </ButtonSlot>
              </PanelBody>
            </Panel>
            <Panel $h={260}>
              <PanelHead>Relation Remarks</PanelHead>
              <PanelBody $gap={6} $pad="6px 12px">
                <Notice>
                  <TbInfoCircle />
                  <NoticeText>
                    <strong>Thompson and Sons - Schiller-Stoltenberg</strong>
                    <span>Old VAT number of Schiller-Stoltenberg: DK123456789</span>
                  </NoticeText>
                </Notice>
                <Notice>
                  <TbInfoCircle />
                  <NoticeText>
                    <strong>Bogan LLC - Kovacek PLC</strong>
                    <span>Unloading address: 55564 Lela Isle always with tipper ABCDE000111 Company GmbH</span>
                  </NoticeText>
                </Notice>
              </PanelBody>
            </Panel>
          </Stack>
        </TopGrid>
        <Panel>
          <PanelHead $h={55} $pad={29}>Orderlines</PanelHead>
          <PanelBody $gap={0} $pad="0 12px 12px 12px">
            <HeadingRow>
              <Origin>Origin</Origin>
              <Destination>
                <h3>Destination</h3>
                <ViewToggle>
                  <ViewOption $on>Formview</ViewOption>
                  <ViewOption>Overview</ViewOption>
                </ViewToggle>
              </Destination>
            </HeadingRow>
            <Block>
              <OriginForm
                radios={["Purchase Contract"]}
                relation="Thompson and Sons - Schiller-Stoltenberg"
                qty="5,100"
                warn
                invoice={<Show text="show (267766)" w={138} />}
              />
              <RightCol>
                <DestinationForm
                  radios={["Sales Contract"]}
                  relation="Bogan LLC - Kovacek PLC"
                  contract="81777: Sweet Whey Powder 25 kg"
                  qty="5,150"
                  count="206"
                  packaging="paper bag 25 kg (Multilayer paper)"
                  address="Bogan LLC, 9357 Watson Street"
                  invoice={<Show text="show (12410428)" w={152} />}
                />
                <ActionRail first />
              </RightCol>
            </Block>
            <BlueRule />
            <Block>
              <OriginForm
                radios={["Unknown", "Purchase Contract", "From stock"]}
                relation="Thompson and Sons - Schiller-Stoltenberg"
                qty="4,900"
                invoice={<Sent />}
              />
              <RightCol>
                <DestinationForm
                  on
                  radios={["Unknown", "Sales Contract", "To stock(lot)", "To existing stock(lot)"]}
                  relation="Bogan LLC - Kovacek PLC"
                  contract="81777: Sweet Whey Powder 25 kg"
                  qty="4,900"
                  count="196"
                  packaging="paper bag 25 kg (Multilayer paper)"
                  address="Bogan LLC, 9357 Watson Street"
                  invoice={<Sent />}
                />
                <ActionRail />
              </RightCol>
            </Block>
            <AddLine><TbPlus /> Order line</AddLine>
          </PanelBody>
        </Panel>
      </Content>
    </Main>
    <ChatTab $top={741}><MdOutlineQuestionAnswer /></ChatTab>
    <ChatTab $top={1382}><MdOutlineQuestionAnswer /></ChatTab>
    <ChatTab $top={2022}><MdOutlineQuestionAnswer /></ChatTab>
    <ChatTab $top={2268}><MdOutlineQuestionAnswer /></ChatTab>
  </Page>
);

export default App;
